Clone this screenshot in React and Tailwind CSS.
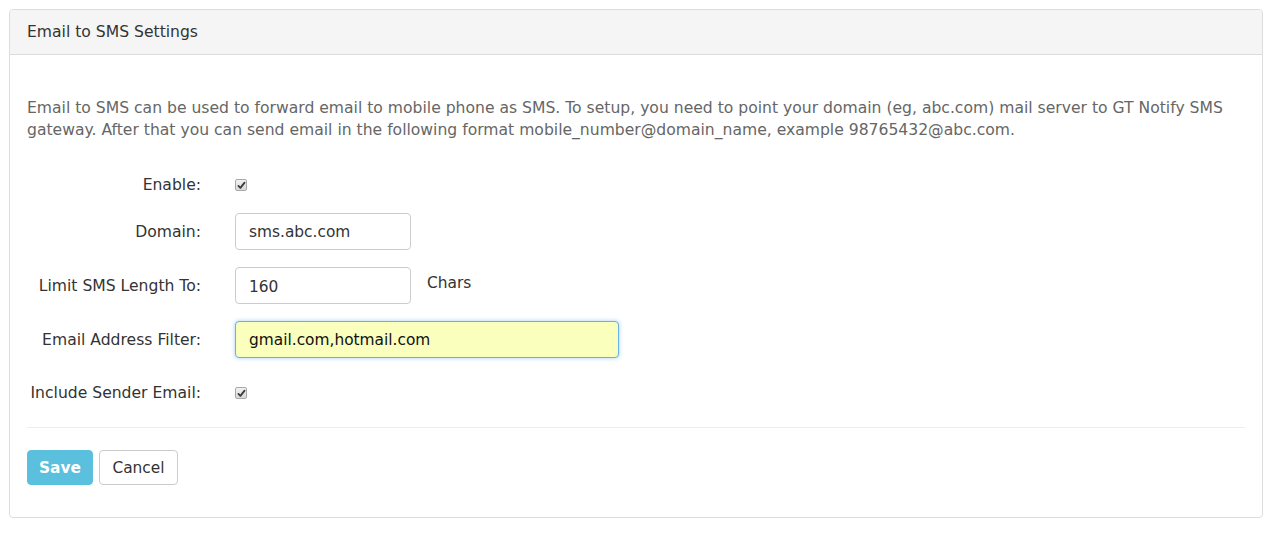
import React, { useState } from "react";

const font = { fontFamily: '"DejaVu Sans", Verdana, sans-serif' };

const Check = ({ checked, onChange }) => (
  <span
    onClick={onChange}
    className="flex h-[12px] w-[12px] cursor-pointer items-center justify-center rounded-[2px] border border-[#a9a9a9] bg-gradient-to-b from-[#f2f2f2] to-[#d8d8d8]"
  >
    {checked && (
      <svg width="9" height="9" viewBox="0 0 10 10">
        <path d="M1.6 5.4 L3.8 7.6 L8.4 1.8" fill="none" stroke="#3a3a3a" strokeWidth="2" strokeLinecap="round" strokeLinejoin="round" />
      </svg>
    )}
  </span>
);

const Row = ({ label, className, children }) => (
  <div className={"flex items-center " + className}>
    <label className="w-[175px] shrink-0 pt-[2px] pr-px text-right text-[15.6px] whitespace-nowrap text-[#333]">{label}</label>
    <div className="ml-[33px] flex items-center">{children}</div>
  </div>
);

const App = () => {
  // form state
  const [enable, setEnable] = useState(true);
  const [sender, setSender] = useState(true);
  const [domain, setDomain] = useState("sms.abc.com");
  const [limit, setLimit] = useState("160");
  const [filter, setFilter] = useState("gmail.com,hotmail.com");

  return (
    <div className="min-h-screen bg-white p-[9px] pr-[12px]" style={font}>
      <div className="overflow-hidden rounded-[4px] border border-[#ddd] bg-white">
        <div className="flex h-[45px] items-center border-b border-[#ddd] bg-[#f5f5f5] px-[17px] pt-px text-[15.6px] text-[#333]">
          Email to SMS Settings
        </div>

        <div className="px-[17px] pt-[42px] pb-[32px]">
          <p className="text-[15.6px] leading-[22px] text-[#666]">
            Email to SMS can be used to forward email to mobile phone as SMS. To setup, you need to point your domain (eg, abc.com) mail server to GT Notify SMS
            gateway. After that you can send email in the following format mobile_number@domain_name, example 98765432@abc.com.
          </p>

          <Row label="Enable:" className="mt-[34px] h-[20px]">
            <Check checked={enable} onChange={() => setEnable(!enable)} />
          </Row>

          <Row label="Domain:" className="mt-[18px]">
            <input
              value={domain}
              onChange={(e) => setDomain(e.target.value)}
              className="h-[37px] w-[176px] rounded-[4px] border border-[#ccc] px-[13px] pt-px text-[15.4px] text-[#333] outline-none"
            />
          </Row>

          <Row label="Limit SMS Length To:" className="mt-[17px]">
            <input
              value={limit}
              onChange={(e) => setLimit(e.target.value)}
              className="h-[37px] w-[176px] rounded-[4px] border border-[#ccc] px-[13px] pt-[2px] text-[15.4px] text-[#333] outline-none"
            />
            <span className="ml-[16px] -mt-[3px] text-[15.4px] text-[#333]">Chars</span>
          </Row>

          <Row label="Email Address Filter:" className="mt-[17px]">
            <input
              value={filter}
              onChange={(e) => setFilter(e.target.value)}
              className="h-[37px] w-[384px] rounded-[4px] border border-[#66afe9] bg-[#faffbd] px-[13px] pt-px text-[15.4px] text-[#111] shadow-[0_0_4px_rgba(102,175,233,0.6)] outline-none"
            />
          </Row>

          <Row label="Include Sender Email:" className="mt-[25px] h-[20px]">
            <Check checked={sender} onChange={() => setSender(!sender)} />
          </Row>

          <hr className="mt-[24px] border-t border-[#eee]" />

          <div className="mt-[22px] flex gap-[6px]">
            <button className="h-[35px] w-[66px] rounded-[4px] border border-[#5bc0de] bg-[#5bc0de] pt-[3px] text-[15.4px] font-bold text-white">
              Save
            </button>
            <button className="h-[35px] w-[79px] rounded-[4px] border border-[#ccc] bg-white pt-[3px] text-[15.4px] text-[#333]">
              Cancel
            </button>
          </div>
        </div>
      </div>
    </div>
  );
};

export default App;
